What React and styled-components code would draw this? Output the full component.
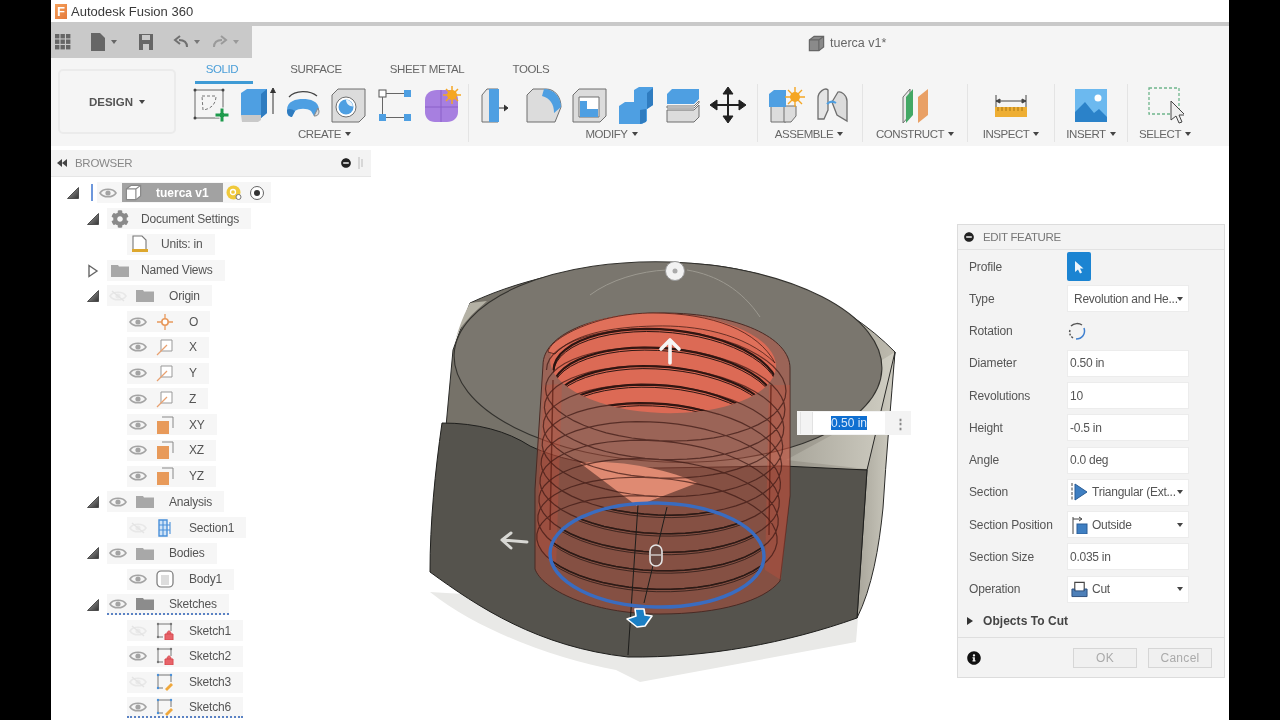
import React from 'react'
import styled, { createGlobalStyle } from 'styled-components'
import { FaCog, FaInfoCircle, FaMinusCircle } from 'react-icons/fa'

const GlobalStyle = createGlobalStyle`
  html, body { margin: 0; padding: 0; background: #000; }
  body { font-family: "Liberation Sans", Arial, sans-serif; overflow: hidden; }
  * { box-sizing: border-box; }
`

const Screen = styled.div`
  width: 1280px;
  height: 720px;
  padding: 0 51px;
  background: #000;
`

const Window = styled.div`
  width: 100%;
  height: 100%;
  display: flex;
  flex-direction: column;
  background: #fff;
  overflow: hidden;
  filter: blur(0.45px);
`

const TitleBar = styled.div`
  height: 22px;
  display: flex;
  align-items: center;
  padding-left: 4px;
  background: #fff;
  flex: none;
`

const AppLogo = styled.span`
  width: 12px;
  height: 15px;
  margin-right: 4px;
  background: linear-gradient(135deg, #f6a05a, #e4793a);
  color: #fff;
  font-size: 13px;
  font-weight: bold;
  line-height: 15px;
  text-align: center;
`

const AppName = styled.span`
  font-size: 13px;
  color: #3a3a3a;
`

const TopStrip = styled.div`
  height: 4px;
  background: #c9c9c9;
  flex: none;
`

const Ribbon = styled.div`
  height: 120px;
  background: #f5f5f5;
  flex: none;
  display: flex;
  flex-direction: column;
`

const TopRow = styled.div`
  height: 32px;
  display: flex;
  align-items: center;
  flex: none;
`

const QuickBar = styled.div`
  width: 201px;
  height: 32px;
  display: flex;
  align-items: center;
  background: #c9c9c9;
`

const DocTitle = styled.div`
  margin-left: 555px;
  padding-top: 2px;
  display: flex;
  align-items: center;
  gap: 4px;
  font-size: 12.5px;
  color: #666;
`

const ToolsRow = styled.div`
  flex: 1;
  display: flex;
  padding-left: 7px;
`

const DesignButton = styled.div`
  width: 118px;
  height: 65px;
  margin-top: 11px;
  border: 2px solid #ebebeb;
  border-radius: 5px;
  display: flex;
  align-items: center;
  justify-content: center;
  gap: 6px;
  font-size: 11.5px;
  font-weight: bold;
  color: #555;
`

const Caret = styled.span`
  display: inline-block;
  flex: none;
  width: 0;
  height: 0;
  border-left: 3px solid transparent;
  border-right: 3px solid transparent;
  border-top: 4px solid ${({ $color }) => $color || '#444'};
`

const ToolsArea = styled.div`
  margin-left: 15px;
  flex: 1;
  display: flex;
  flex-direction: column;
`

const Tabs = styled.div`
  height: 26px;
  display: flex;
  padding-left: 4px;
  flex: none;
`

const Tab = styled.div`
  width: ${({ $width }) => $width}px;
  height: 26px;
  padding: 5px ${({ $active }) => ($active ? 4 : 0)}px 0 0;
  text-align: center;
  font-size: 11.5px;
  letter-spacing: -0.4px;
  color: ${({ $active }) => ($active ? '#4a9ed8' : '#666')};
  border-bottom: 3px solid ${({ $active }) => ($active ? '#3f9bd5' : 'transparent')};
`

const Groups = styled.div`
  display: flex;
  height: 60px;
`

const Group = styled.div`
  width: ${({ $width }) => $width}px;
  display: flex;
  flex-direction: column;
  align-items: center;
  border-right: 1px solid ${({ $last }) => ($last ? 'transparent' : '#e4e4e4')};
  height: 58px;
`

const GroupIcons = styled.div`
  display: flex;
  height: 41px;
  align-items: center;
  margin-left: ${({ $shift }) => $shift || 0}px;
`

const ToolSlot = styled.div`
  width: 46px;
  height: 36px;
  display: flex;
  align-items: center;
  justify-content: center;
`

const GroupLabel = styled.div`
  display: flex;
  align-items: center;
  gap: 4px;
  margin-top: 3px;
  margin-left: ${({ $shift }) => $shift || 0}px;
  font-size: 11.5px;
  letter-spacing: -0.45px;
  color: #666;
`

const Canvas = styled.div`
  position: relative;
  flex: 1;
  background: #fff;
`

const NutDrawing = styled.svg`
  position: absolute;
  left: 0;
  top: 0;
  width: 1178px;
  height: 574px;
`

const Browser = styled.div`
  position: relative;
  width: 320px;
  padding-top: 4px;
`

const BrowserHead = styled.div`
  height: 27px;
  margin-bottom: 3px;
  display: flex;
  align-items: center;
  padding: 0 7px 0 5px;
  background: #f3f3f3;
  border-bottom: 1px solid #e6e6e6;
  font-size: 11.5px;
  letter-spacing: -0.3px;
  color: #888;
`

const HeadTitle = styled.span`
  margin-left: 7px;
  flex: 1;
`

const Row = styled.div`
  height: 25.75px;
  display: flex;
  align-items: center;
  padding-left: ${({ $left }) => $left}px;
`

const Toggle = styled.span`
  width: 12px;
  height: 12px;
  margin-right: 8px;
  flex: none;
  display: flex;
`

const ActiveBar = styled.span`
  width: 2px;
  height: 17px;
  margin: 0 4px 0 4px;
  background: #6d97dc;
`

const Chip = styled.div`
  height: 21px;
  display: flex;
  align-items: center;
  background: #f6f6f6;
  padding-right: ${({ $pad }) => ($pad === undefined ? 12 : $pad)}px;
  border-bottom: ${({ $warn }) => ($warn ? '2px dotted #5a82c4' : 'none')};
`

const EyeSlot = styled.span`
  width: 22px;
  display: flex;
  justify-content: center;
  flex: none;
`

const IconSlot = styled.span`
  width: ${({ $wide }) => ($wide ? 32 : 26)}px;
  display: flex;
  justify-content: center;
  flex: none;
  color: #8a8a8a;
`

const NodeLabel = styled.span`
  margin-left: 8px;
  font-size: 12px;
  letter-spacing: -0.2px;
  color: #555;
  white-space: nowrap;
`

const RootName = styled.div`
  width: 101px;
  height: 19px;
  display: flex;
  align-items: center;
  padding-left: 2px;
  background: #a2a2a2;
  margin-left: 3px;
  font-size: 12px;
  font-weight: bold;
  color: #fff;
`

const RootText = styled.span`
  margin-left: 13px;
`

const RootBadges = styled.div`
  display: flex;
  align-items: center;
  gap: 7px;
  margin-left: 3px;
`

const EditPanel = styled.div`
  position: absolute;
  left: 906px;
  top: 78px;
  width: 268px;
  height: 454px;
  background: #f3f3f3;
  border: 1px solid #dcdcdc;
  display: flex;
  flex-direction: column;
`

const PanelHead = styled.div`
  height: 25px;
  display: flex;
  align-items: center;
  gap: 9px;
  padding-left: 6px;
  border-bottom: 1px solid #e2e2e2;
  font-size: 11.5px;
  letter-spacing: -0.35px;
  color: #777;
  flex: none;
`

const PanelBody = styled.div`
  flex: 1;
  padding-top: 0.5px;
`

const Field = styled.div`
  height: 32.25px;
  display: flex;
  align-items: center;
  padding-left: 11px;
`

const FieldLabel = styled.span`
  width: 98px;
  font-size: 12px;
  color: #555;
  letter-spacing: -0.15px;
  white-space: nowrap;
  flex: none;
`

const PickButton = styled.div`
  width: 24px;
  height: 29px;
  border-radius: 2px;
  background: #1b84d2;
  display: flex;
  align-items: center;
  justify-content: center;
`

const Control = styled.div`
  width: 122px;
  height: 27px;
  display: flex;
  align-items: center;
  gap: 4px;
  padding: 0 5px 0 ${({ $pad }) => $pad}px;
  background: #fff;
  border: 1px solid #ececec;
  font-size: 12px;
  letter-spacing: -0.25px;
  color: #555;
  white-space: nowrap;
`

const ControlText = styled.span`
  flex: 1;
  min-width: 0;
`

const ObjectsRow = styled.div`
  height: 32px;
  display: flex;
  align-items: center;
  gap: 10px;
  padding-left: 9px;
  font-size: 12px;
  font-weight: bold;
  letter-spacing: 0.05px;
  color: #444;
`

const SideCaret = styled.span`
  width: 0;
  height: 0;
  border-top: 4px solid transparent;
  border-bottom: 4px solid transparent;
  border-left: 6px solid #333;
`

const PanelFoot = styled.div`
  height: 40px;
  display: flex;
  align-items: center;
  padding: 0 12px 0 9px;
  border-top: 1px solid #dedede;
  flex: none;
`

const FootButton = styled.div`
  width: 64px;
  height: 20px;
  margin-left: ${({ $gap }) => $gap}px;
  background: #f0f0f0;
  border: 1px solid #d6d6d6;
  text-align: center;
  line-height: 18px;
  font-size: 12px;
  letter-spacing: 0.3px;
  color: #aaa;
`

const FloatInput = styled.div`
  position: absolute;
  left: 746px;
  top: 265px;
  width: 114px;
  height: 24px;
  background: #f3f3f3;
  display: flex;
  align-items: center;
  padding-left: 3px;
`

const GripLines = styled.span`
  width: 13px;
  height: 22px;
  border-left: 1px solid #e2e2e2;
  border-right: 1px solid #e2e2e2;
`

const FloatField = styled.div`
  width: 72px;
  height: 22px;
  background: #fff;
  display: flex;
  align-items: center;
  justify-content: center;
  font-size: 12px;
`

const Selected = styled.span`
  background: #0f6fd1;
  color: #d8e8fa;
`

const Grip = styled.span`
  margin-left: 9px;
  color: #888;
  font-size: 13px;
  font-weight: bold;
  line-height: 1;
`

const Eye = ({ off }) => (
  <svg width="18" height="12" viewBox="0 0 18 12">
    <path d="M1 6c3-5 13-5 16 0-3 5-13 5-16 0z" fill="none" stroke={off ? '#e8e8e8' : '#a4a4a4'} strokeWidth="1.6" />
    <circle cx="9" cy="6" r="2.6" fill={off ? '#eaeaea' : '#a4a4a4'} />
    {off && <path d="M3 1l12 10" stroke="#e4e4e4" strokeWidth="1.4" />}
  </svg>
)

const OpenTriangle = () => (
  <svg width="12" height="12" viewBox="0 0 12 12">
    <defs>
      <linearGradient id="tri" x1="0" x2="1" y1="0" y2="1">
        <stop offset="0" stopColor="#aaa" />
        <stop offset="1" stopColor="#333" />
      </linearGradient>
    </defs>
    <path d="M11.500 0.500v11H0.500z" fill="url(#tri)" stroke="#444" strokeWidth="0.9" />
  </svg>
)

const ClosedTriangle = () => (
  <svg width="12" height="14" viewBox="0 0 12 14">
    <path d="M2 1.5l8 5.5-8 5.5z" fill="#fff" stroke="#666" strokeWidth="1.4" />
  </svg>
)

const Folder = ({ warn }) => (
  <svg width="18" height="13" viewBox="0 0 18 13">
    <path d="M0 1h7l1 1.5h10V13H0z" fill={warn ? '#8c8c8c' : '#a8a8a8'} />
  </svg>
)

const OriginPoint = () => (
  <svg width="18" height="18" viewBox="0 0 18 18">
    <path d="M9 1v16M1 9h16" stroke="#e8995c" strokeWidth="1.3" />
    <circle cx="9" cy="9" r="3.2" fill="#fff" stroke="#e8995c" strokeWidth="1.6" />
  </svg>
)

const AxisIcon = () => (
  <svg width="18" height="18" viewBox="0 0 18 18">
    <path d="M5 2h11v11H5z" fill="#fff" stroke="#999" strokeWidth="1" />
    <path d="M1 17L11 7" stroke="#e8a070" strokeWidth="1.2" />
  </svg>
)

const PlaneIcon = () => (
  <svg width="18" height="18" viewBox="0 0 18 18">
    <path d="M6 1h11v11" fill="none" stroke="#888" strokeWidth="1" />
    <rect x="1" y="5" width="12" height="13" fill="#e89a5a" />
  </svg>
)

const SectionIcon = () => (
  <svg width="16" height="18" viewBox="0 0 16 18">
    <path d="M2 1h8v16H2z" fill="#cfe3f7" stroke="#4a90d9" strokeWidth="1.4" />
    <path d="M2 6h11M2 11h11M6 1v16M13 3v12" stroke="#4a90d9" strokeWidth="1.1" fill="none" />
  </svg>
)

const BodyIcon = () => (
  <svg width="18" height="18" viewBox="0 0 18 18">
    <rect x="1" y="1" width="16" height="16" rx="4" fill="#fff" stroke="#777" strokeWidth="1.2" />
    <rect x="5" y="5" width="8" height="10" fill="#ddd" />
  </svg>
)

const SketchNode = ({ color, badge }) => (
  <svg width="18" height="18" viewBox="0 0 18 18">
    <path d="M2 2h13M2 2v13M2 15h5M15 2v7" stroke="#777" strokeWidth="1" fill="none" />
    <g fill={color}>
      <circle cx="2" cy="2" r="1.2" />
      <circle cx="15" cy="2" r="1.2" />
      <circle cx="2" cy="15" r="1.2" />
    </g>
    {badge === 'lock' && <path d="M9 12h8v6H9zM11 12c0-4 4-4 4 0" fill="#e8646a" stroke="#d84a50" strokeWidth="1" />}
    {badge === 'pen' && <path d="M9 16l6-6 2 2-6 6z" fill="#f0a83c" />}
  </svg>
)

const UnitsIcon = () => (
  <svg width="18" height="18" viewBox="0 0 18 18">
    <path d="M2 15V1h9l4 4v10" fill="#fff" stroke="#777" strokeWidth="1.1" />
    <rect x="1" y="14" width="16" height="3" fill="#dda72e" />
  </svg>
)

const Cube = ({ size = 16, fill = '#fff', stroke = '#888' }) => (
  <svg width={size} height={size} viewBox="0 0 16 16">
    <path d="M2 5l4-3h8v9l-4 3H2z" fill={fill} stroke={stroke} />
    <path d="M2 5h8v9M10 5l4-3" fill="none" stroke={stroke} />
  </svg>
)

const GridIcon = () => (
  <svg width="16" height="16" viewBox="0 0 16 16" fill="#666">
    {[0, 5.5, 11].map(x => [0, 5.5, 11].map(y => <rect key={x + '-' + y} x={x} y={y} width="4.4" height="4.4" />))}
  </svg>
)

const QuickSlot = styled.span`
  display: flex;
  align-items: center;
  gap: 5px;
  margin-left: ${({ $left }) => $left}px;
`

const QuickIcon = ({ d, fill = '#666', stroke = 'none', w = 16 }) => (
  <svg width={w} height="18" viewBox={`0 0 ${w} 18`}>
    <path d={d} fill={fill} stroke={stroke} strokeWidth="2" fillRule="evenodd" />
  </svg>
)

const Tool = ({ children }) => (
  <ToolSlot>
    <svg width="40" height="38" viewBox="0 0 40 38">{children}</svg>
  </ToolSlot>
)

const BLUE = '#4e9fe2'
const BLUE_DK = '#2f7cc0'
const GRAY = '#dcdcdc'
const LINE = '#6f6f6f'

const createTools = [
  <g key="sketch">
    <path d="M4 4h28v28H4z" fill="none" stroke="#666" strokeWidth="1" />
    <path d="M11 10h14c0 8-5 13-13 14z" fill="none" stroke="#777" strokeDasharray="3 2" />
    <path d="M29 22h4v5h5v4h-5v5h-4v-5h-5v-4h5z" fill="#1d9a4c" stroke="#f5f5f5" />
    <g fill="#444"><circle cx="4" cy="4" r="1.5" /><circle cx="32" cy="4" r="1.5" /><circle cx="4" cy="32" r="1.5" /></g>
  </g>,
  <g key="extrude">
    <path d="M4 29V7l6-4h20v24l-6 5H8z" fill={BLUE} />
    <path d="M24 8l6-5v24l-6 5z" fill={BLUE_DK} />
    <path d="M4 29h20v5l-3 2H5z" fill="#c9c9c9" />
    <path d="M36 28V4M33.5 7L36 2l2.5 5" stroke="#333" fill="#333" strokeWidth="1" />
  </g>,
  <g key="revolve">
    <path d="M4 24c0-9 9-11 16-11s16 2 16 11c0 5-2 6-5 6l-3-5c-4-3-12-3-16 0l-3 5c-3 0-5-1-5-6z" fill={BLUE} />
    <path d="M4 24c0 5 2 7 5 7l3-6c-3-2-6-3-8-1z" fill={BLUE_DK} />
    <path d="M31 30l4-8 1 3c0 4-2 5-5 5z" fill="#ddd" stroke="#888" />
    <path d="M6 11C12 4 27 4 34 10" fill="none" stroke="#444" strokeWidth="1.2" />
  </g>,
  <g key="hole">
    <path d="M3 9l6-6h27v27l-6 6H3z" fill={GRAY} stroke={LINE} />
    <circle cx="17" cy="21" r="10" fill="#fff" stroke={LINE} />
    <circle cx="17" cy="21" r="7.5" fill={BLUE} />
    <path d="M17 13.5a7.500 7.500 0 0 1 7 7c-4 0-7-3-7-7z" fill="#e8f2fb" />
  </g>,
  <g key="pattern">
    <rect x="4" y="4" width="7" height="7" fill="#fff" stroke="#555" />
    <rect x="29" y="4" width="7" height="7" fill={BLUE} />
    <rect x="4" y="28" width="7" height="7" fill={BLUE} />
    <rect x="29" y="28" width="7" height="7" fill={BLUE} />
    <path d="M11 7.500h18M7.500 11v17M11 31.500h18" stroke="#666" />
  </g>,
  <g key="form">
    <path d="M4 14c0-6 5-10 12-10h12c6 0 9 5 9 10v12c0 6-5 10-11 10H14C8 36 4 32 4 26z" fill="#a77fe0" />
    <path d="M20 4v32M4 21h33" stroke="#8a60c8" />
    <circle cx="31" cy="9" r="5" fill="#f5a623" />
    <path d="M31 0v18M22 9h18M25 3l12 12M37 3L25 15" stroke="#f5a623" strokeWidth="1.5" />
  </g>
]

const modifyTools = [
  <g key="press">
    <path d="M4 36V9l5-6h11v33z" fill="#e8e8e8" stroke={LINE} />
    <path d="M11 3h10v33H11z" fill={BLUE} />
    <path d="M21 22h8M26 19l4 3-4 3" stroke="#333" fill="#333" />
  </g>,
  <g key="fillet">
    <path d="M3 36V9l6-6h13c9 0 15 8 15 18l-6 15z" fill={GRAY} stroke={LINE} />
    <path d="M20 3c10 0 17 8 17 18l-7 6c0-9-4-15-12-17z" fill={BLUE} />
  </g>,
  <g key="chamfer">
    <path d="M3 36V9l6-6h27v27l-6 6z" fill={GRAY} stroke={LINE} />
    <path d="M9 11h20v20H9z" fill="#fff" stroke={LINE} />
    <path d="M10 15h7v8h11v8H10z" fill={BLUE} />
  </g>,
  <g key="combine">
    <path d="M18 4l5-3h14v18l-6 4v12l-5 3H3V20l6-4h9z" fill={BLUE} />
    <path d="M31 23V7l6-5v17zM24 38V24l6-1v13z" fill={BLUE_DK} />
  </g>,
  <g key="offset">
    <path d="M5 8l5-5h27v10l-5 5H5z" fill={BLUE} />
    <path d="M5 20h27l5-5v2l-5 5H5z" fill="#fff" stroke="#777" />
    <path d="M5 24h27l5-5v12l-5 5H5z" fill={GRAY} stroke={LINE} />
  </g>,
  <g key="move" fill="#222" stroke="#222">
    <path d="M20 6v26M7 19h26" strokeWidth="2" />
    <path d="M20 1l5 7H15zM20 37l5-7H15zM2 19l7-5v10zM38 19l-7-5v10z" />
  </g>
]

const assembleTools = [
  <g key="comp">
    <path d="M5 36V20h15v16z" fill={GRAY} stroke={LINE} />
    <path d="M18 36V20h12v10l-5 6z" fill={GRAY} stroke={LINE} />
    <path d="M3 21V8l5-4h12v17z" fill={BLUE} />
    <circle cx="29" cy="11" r="5" fill="#f5a623" />
    <path d="M29 1v20M19 11h20M22 4l14 14M36 4L22 18" stroke="#f5a623" strokeWidth="1.4" />
  </g>,
  <g key="joint">
    <path d="M6 33V12c0-6 7-11 10-8v20l-4 9z" fill="#e5e5e5" stroke={LINE} strokeWidth="1.3" />
    <path d="M20 16l6-10c3-1 9 3 9 9v20l-10-6z" fill={GRAY} stroke={LINE} strokeWidth="1.3" />
    <path d="M15 18c3-3 6-3 9-1" stroke={BLUE} strokeWidth="2" fill="none" />
  </g>
]

const toolGroups = [
  { label: 'CREATE', width: 278, tools: createTools, iconShift: -8, labelShift: -10 },
  { label: 'MODIFY', width: 289, tools: modifyTools, labelShift: -3 },
  { label: 'ASSEMBLE', width: 105, tools: assembleTools, iconShift: -2, labelShift: -2 },
  {
    label: 'CONSTRUCT',
    width: 105,
    tools: [
      <g key="plane">
        <path d="M8 11l7-8v26l-7 8z" fill="#e8e8e8" stroke={LINE} />
        <path d="M11 11l7-8v26l-7 8z" fill="#43a865" />
        <path d="M23 11l10-8v26l-10 8z" fill="#e9a065" />
      </g>
    ]
  },
  {
    label: 'INSPECT',
    width: 87,
    tools: [
      <g key="measure">
        <path d="M5 9v14M35 9v14M5 15h30M5 15l4-2v4zM35 15l-4-2v4z" stroke="#444" fill="#444" strokeWidth="1" />
        <rect x="4" y="21" width="32" height="10" fill="#eeae33" />
        <path d="M7 21v4M11 21v4M15 21v4M19 21v4M23 21v4M27 21v4M31 21v4" stroke="#a87612" />
      </g>
    ]
  },
  {
    label: 'INSERT',
    width: 73,
    tools: [
      <g key="image">
        <rect x="4" y="3" width="32" height="33" fill="#6cb9ef" />
        <circle cx="27" cy="12" r="3.500" fill="#fff" />
        <path d="M4 36V26l10-10 9 11 5-4 8 8v5z" fill="#2b82c9" />
      </g>
    ]
  },
  {
    label: 'SELECT',
    width: 73,
    last: true,
    labelShift: 2,
    tools: [
      <g key="select">
        <rect x="5" y="2" width="30" height="26" fill="none" stroke="#6fb58c" strokeWidth="1.3" strokeDasharray="3 2" />
        <path d="M27 15v19l5-4 3 7 3-1-3-7h6z" fill="#eee" stroke="#444" />
      </g>
    ]
  }
]

const TreeIcon = ({ name }) => {
  if (name === 'gear') return <FaCog size={18} />
  if (name === 'folder') return <Folder />
  if (name === 'folderWarn') return <Folder warn />
  if (name === 'units') return <UnitsIcon />
  if (name === 'point') return <OriginPoint />
  if (name === 'axis') return <AxisIcon />
  if (name === 'plane') return <PlaneIcon />
  if (name === 'section') return <SectionIcon />
  if (name === 'body') return <BodyIcon />
  if (name === 'sketchLock') return <SketchNode color="#777" badge="lock" />
  if (name === 'sketchEdit') return <SketchNode color="#4a90d9" badge="pen" />
  return null
}

const treeRows = [
  { left: 36, toggle: 'open', icon: 'gear', label: 'Document Settings' },
  { left: 76, icon: 'units', label: 'Units: in' },
  { left: 36, toggle: 'closed', icon: 'folder', label: 'Named Views' },
  { left: 36, toggle: 'open', eye: 'off', icon: 'folder', label: 'Origin' },
  { left: 76, eye: 'on', icon: 'point', label: 'O' },
  { left: 76, eye: 'on', icon: 'axis', label: 'X' },
  { left: 76, eye: 'on', icon: 'axis', label: 'Y' },
  { left: 76, eye: 'on', icon: 'axis', label: 'Z' },
  { left: 76, eye: 'on', icon: 'plane', label: 'XY' },
  { left: 76, eye: 'on', icon: 'plane', label: 'XZ' },
  { left: 76, eye: 'on', icon: 'plane', label: 'YZ' },
  { left: 36, toggle: 'open', eye: 'on', icon: 'folder', label: 'Analysis' },
  { left: 76, eye: 'off', icon: 'section', label: 'Section1' },
  { left: 36, toggle: 'open', eye: 'on', icon: 'folder', label: 'Bodies' },
  { left: 76, eye: 'on', icon: 'body', label: 'Body1' },
  { left: 36, toggle: 'open', eye: 'on', icon: 'folderWarn', label: 'Sketches', warn: true },
  { left: 76, eye: 'off', icon: 'sketchLock', label: 'Sketch1' },
  { left: 76, eye: 'on', icon: 'sketchLock', label: 'Sketch2' },
  { left: 76, eye: 'off', icon: 'sketchEdit', label: 'Sketch3' },
  { left: 76, eye: 'on', icon: 'sketchEdit', label: 'Sketch6', warn: true }
]

const TreeRow = ({ row }) => (
  <Row $left={row.left}>
    {row.toggle && (
      <Toggle>{row.toggle === 'open' ? <OpenTriangle /> : <ClosedTriangle />}</Toggle>
    )}
    <Chip $warn={row.warn}>
      {row.eye && <EyeSlot><Eye off={row.eye === 'off'} /></EyeSlot>}
      <IconSlot $wide={!!row.eye}><TreeIcon name={row.icon} /></IconSlot>
      <NodeLabel>{row.label}</NodeLabel>
    </Chip>
  </Row>
)

// helix of the cut thread; side picks the back half, the front half or all of it
const helixPath = (offset, rx, side) => {
  let d = ''
  let pen = false
  for (let i = 0; i <= 500; i++) {
    const t = (i / 500) * Math.PI * 2 * 9.25 - Math.PI
    const s = Math.sin(t)
    const visible = side === 'all' || (side === 'back' ? s <= 0.02 : s >= -0.02)
    if (!visible) {
      pen = false
      continue
    }
    const turn = t / (Math.PI * 2)
    const x = 666 - turn * 1.1 + rx * Math.cos(t)
    const y = 385 + turn * 18.6 + offset + 51 * s + (x - 660) * 0.05
    d += (pen ? 'L' : 'M') + x.toFixed(1) + ' ' + y.toFixed(1)
    pen = true
  }
  return d
}

const NutSvg = () => (
  <NutDrawing viewBox="51 146 1178 574">
    <defs>
      <linearGradient id="rightFace" x1="0" x2="1">
        <stop offset="0" stopColor="#a8a59a" />
        <stop offset="1" stopColor="#d0cec3" />
      </linearGradient>
      <linearGradient id="chamfer" x1="0" x2="1">
        <stop offset="0.55" stopColor="#767269" />
        <stop offset="1" stopColor="#bdbaae" />
      </linearGradient>
      <clipPath id="upperHole">
        <ellipse cx="663" cy="363" rx="113" ry="50" transform="rotate(2 663 363)" />
      </clipPath>
      <clipPath id="lowerRing">
        <ellipse cx="657" cy="555" rx="107" ry="52" transform="rotate(1 657 555)" />
      </clipPath>
    </defs>
    <path d="M430 592c50 40 130 68 186 78l24 12 216-40 2-24z" fill="#e9e9e7" />
    <path d="M470 303C530 275 600 263 675 263c90 0 170 38 220 89l-7 58-21 60H442l11-120z" fill="url(#chamfer)" stroke="#2a2a28" strokeWidth="1" />
    <path d="M470 303c-8 15-14 32-17 48 2-10 4-18 10-26 8-10 15-16 24-24z" fill="#b4b1a5" />
    <path d="M895 352l-13 8c-2 25-20 55-50 75l-46 25 81 9z" fill="url(#rightFace)" />
    <path d="M895 352l-28 118-10 148c15-30 22-70 26-110 3-50 8-105 12-156z" fill="url(#rightFace)" stroke="#2a2a28" />
    <ellipse cx="668" cy="362" rx="214" ry="100" fill="#7a766e" stroke="#33322e" strokeWidth="1.1" transform="rotate(2 668 362)" />
    <path d="M442 423c35 0 65 8 88 23 40 19 90 22 130 22l123 -2 84 4-10 148c-70 25-150 40-229 39-90-10-150-50-198-85 0-50 5-100 12-149z" fill="#55534d" stroke="#1f1f1d" strokeWidth="1" />
    <path d="M543 365c0-30 50-52 120-52 75 0 127 25 127 55v128l-10 85c-16 20-60 33-120 33-70 0-118-25-125-45l0-80z" fill="#c94d36" fillOpacity="0.42" stroke="#4a2a24" strokeWidth="1" />
    <path d="M544 385l-8 160 20 24 6-185zM769 385l-4 185 16 10 9-85v-110z" fill="#d4503a" fillOpacity="0.28" />
    <ellipse cx="663" cy="363" rx="113" ry="50" fill="#dc6a55" transform="rotate(2 663 363)" />
    <path d="M548 352c2-14 50-39 105-39 60 0 105 18 122 50-30-30-80-38-120-37-45 1-82 8-100 28z" fill="#e0705a" stroke="#4a2018" strokeWidth="0.8" />
    <path d="M580 463l57 43 60-23c-30-14-80-24-117-20z" fill="#df8a72" />
    <g clipPath="url(#upperHole)" fill="none" stroke="#2b1512">
      <path d={helixPath(0, 113, 'back')} strokeWidth="2.2" />
      <path d={helixPath(2.6, 113, 'back')} strokeWidth="1" />
    </g>
    <path d={helixPath(0, 120, 'all')} fill="none" stroke="#3a1712" strokeWidth="1.2" strokeOpacity="0.7" />
    <g clipPath="url(#lowerRing)" fill="none" stroke="#2b1a16">
      <path d={helixPath(0, 120, 'front')} strokeWidth="1.5" />
      <path d={helixPath(2.4, 120, 'front')} strokeWidth="0.8" />
    </g>
    <path d="M553 380l-3 150M771 385l-2 150" stroke="#5a1a10" strokeWidth="1.4" strokeOpacity="0.7" />
    <path d="M638 505l-10 150M667 507l-23 96" stroke="#1d1d1b" strokeWidth="1" />
    <ellipse cx="657" cy="555" rx="107" ry="52" fill="none" stroke="#3a6cc0" strokeWidth="3.4" transform="rotate(1 657 555)" />
    <path d="M590 295c20-15 50-24 77-25M687 270c30 5 55 20 73 47" fill="none" stroke="#9c9990" strokeWidth="1" />
    <circle cx="675" cy="271" r="9.5" fill="#f2f2f2" stroke="#999" />
    <circle cx="675" cy="271" r="2.5" fill="#aaa" />
    <path d="M670 363v-22M661 349l9-9 9 9" fill="none" stroke="#f5f5f5" strokeWidth="3.6" strokeLinecap="round" strokeLinejoin="round" />
    <path d="M527 542l-25-2M511 533l-9 7 9 8" fill="none" stroke="#d8d8d4" strokeWidth="3" strokeLinecap="round" strokeLinejoin="round" />
    <rect x="650" y="545" width="12" height="21" rx="6" fill="#6a4a42" stroke="#e4e4e4" strokeWidth="1.6" />
    <path d="M651 555h10" stroke="#e4e4e4" strokeWidth="1.2" />
    <path d="M635 609h9l1 6 7 1-7 10-8 1-10-8 9-3z" fill="#1b7fc4" stroke="#fff" strokeWidth="1.6" strokeLinejoin="round" />
  </NutDrawing>
)

const CursorIcon = () => (
  <svg width="10" height="14" viewBox="0 0 10 14">
    <path d="M1 1v11l3-2.500 2 4 2-1-2-4h3.500z" fill="#eef5fb" />
  </svg>
)

const RotationIcon = () => (
  <svg width="20" height="20" viewBox="0 0 20 20" fill="none" strokeWidth="1.5">
    <path d="M4 5c3-3 8-3 11-1" stroke="#555" />
    <path d="M17 7c2 6-2 11-8 11" stroke="#3f80d0" />
    <path d="M6 17c-3-2-4-5-3-8" stroke="#555" strokeDasharray="2 1.500" />
  </svg>
)

const ControlIcon = styled.svg`
  flex: none;
`

const TriangleIcon = () => (
  <ControlIcon width="17" height="18" viewBox="0 0 17 18">
    <path d="M1 0v18" stroke="#444" strokeDasharray="3 1.500" />
    <path d="M4 1l12 8-12 8z" fill="#3f7fc2" stroke="#2a5d96" />
  </ControlIcon>
)

const OutsideIcon = () => (
  <ControlIcon width="17" height="18" viewBox="0 0 17 18">
    <path d="M2 1v17M2 3h8M8 1l3 2-3 2" fill="none" stroke="#444" />
    <rect x="6" y="8" width="10" height="10" fill="#3f7fc2" stroke="#2a5d96" />
  </ControlIcon>
)

const CutIcon = () => (
  <ControlIcon width="17" height="18" viewBox="0 0 18 18">
    <path d="M4 11V2h10v9" fill="#fff" stroke="#444" strokeWidth="1.2" />
    <path d="M1 9h3v2h10V9h3v8H1z" fill="#4d7fb8" stroke="#2a4d7a" />
  </ControlIcon>
)

const fields = [
  { label: 'Type', text: 'Revolution and He...', select: true, pad: 6 },
  { label: 'Rotation', rotation: true },
  { label: 'Diameter', text: '0.50 in', pad: 2 },
  { label: 'Revolutions', text: '10', pad: 2 },
  { label: 'Height', text: '-0.5 in', pad: 2 },
  { label: 'Angle', text: '0.0 deg', pad: 2 },
  { label: 'Section', text: 'Triangular (Ext...', select: true, icon: <TriangleIcon />, pad: 3 },
  { label: 'Section Position', text: 'Outside', select: true, icon: <OutsideIcon />, pad: 3 },
  { label: 'Section Size', text: '0.035 in', pad: 2 },
  { label: 'Operation', text: 'Cut', select: true, icon: <CutIcon />, pad: 3 }
]

const App = () => (
  <Screen>
    <GlobalStyle />
    <Window>
      <TitleBar>
        <AppLogo>F</AppLogo>
        <AppName>Autodesk Fusion 360</AppName>
      </TitleBar>
      <TopStrip />
      <Ribbon>
        <TopRow>
          <QuickBar>
            <QuickSlot $left={4}><GridIcon /></QuickSlot>
            <QuickSlot $left={19}>
              <QuickIcon d="M1 0h9l5 5v13H1z" w={16} />
              <Caret $color="#666" />
            </QuickSlot>
            <QuickSlot $left={21}>
              <QuickIcon d="M1 1h14v16H1zM4 2v5h8V2zM5 11v6h6v-6z" w={16} />
            </QuickSlot>
            <QuickSlot $left={19}>
              <QuickIcon d="M14 14c0-5-3-7-8-7M7 3L2 7l5 4" fill="none" stroke="#707070" w={16} />
              <Caret $color="#777" />
            </QuickSlot>
            <QuickSlot $left={12}>
              <QuickIcon d="M2 14c0-5 3-7 8-7M9 3l5 4-5 4" fill="none" stroke="#9a9a9a" w={16} />
              <Caret $color="#999" />
            </QuickSlot>
          </QuickBar>
          <DocTitle>
            <Cube size={19} fill="#8a8a8a" stroke="#666" />
            tuerca v1*
          </DocTitle>
        </TopRow>
        <ToolsRow>
          <DesignButton>DESIGN <Caret /></DesignButton>
          <ToolsArea>
            <Tabs>
              <Tab $width={58} $active>SOLID</Tab>
              <Tab $width={126}>SURFACE</Tab>
              <Tab $width={96}>SHEET METAL</Tab>
              <Tab $width={112}>TOOLS</Tab>
            </Tabs>
            <Groups>
              {toolGroups.map(g => (
                <Group key={g.label} $width={g.width} $last={g.last}>
                  <GroupIcons $shift={g.iconShift}>
                    {g.tools.map(t => <Tool key={t.key}>{t}</Tool>)}
                  </GroupIcons>
                  <GroupLabel $shift={g.labelShift}>{g.label} <Caret /></GroupLabel>
                </Group>
              ))}
            </Groups>
          </ToolsArea>
        </ToolsRow>
      </Ribbon>
      <Canvas>
        <NutSvg />
        <Browser>
          <BrowserHead>
            <svg width="12" height="8" viewBox="0 0 12 8" fill="#444">
              <path d="M6 0v8L1 4zM11 0v8L6 4z" />
            </svg>
            <HeadTitle>BROWSER</HeadTitle>
            <FaMinusCircle size={10} color="#222" />
            <svg width="6" height="12" viewBox="0 0 6 12" style={{ marginLeft: 7 }}>
              <path d="M1 0v12M4 2v8" stroke="#bbb" />
            </svg>
          </BrowserHead>
          <Row $left={16}>
            <Toggle><OpenTriangle /></Toggle>
            <ActiveBar />
            <Chip $pad={6}>
              <EyeSlot><Eye /></EyeSlot>
              <RootName>
                <Cube size={19} />
                <RootText>tuerca v1</RootText>
              </RootName>
              <RootBadges>
                <svg width="16" height="16" viewBox="0 0 16 16">
                  <circle cx="7.500" cy="7.500" r="7" fill="#f0c93a" />
                  <circle cx="7" cy="7" r="2.500" fill="none" stroke="#fff" strokeWidth="1.300" />
                  <circle cx="12.500" cy="12" r="2.500" fill="#fff" stroke="#777" />
                </svg>
                <svg width="16" height="16" viewBox="0 0 16 16">
                  <circle cx="8" cy="8" r="6.500" fill="#fff" stroke="#666" />
                  <circle cx="8" cy="8" r="3" fill="#333" />
                </svg>
              </RootBadges>
            </Chip>
          </Row>
          {treeRows.map(r => <TreeRow key={r.label} row={r} />)}
        </Browser>
        <FloatInput>
          <GripLines />
          <FloatField><Selected>0.50 in</Selected></FloatField>
          <Grip>⋮</Grip>
        </FloatInput>
        <EditPanel>
          <PanelHead>
            <FaMinusCircle size={10} color="#222" />
            EDIT FEATURE
          </PanelHead>
          <PanelBody>
            <Field>
              <FieldLabel>Profile</FieldLabel>
              <PickButton><CursorIcon /></PickButton>
            </Field>
            {fields.map(f => (
              <Field key={f.label}>
                <FieldLabel>{f.label}</FieldLabel>
                {f.rotation ? <RotationIcon /> : (
                  <Control $pad={f.pad}>
                    {f.icon}
                    <ControlText>{f.text}</ControlText>
                    {f.select && <Caret />}
                  </Control>
                )}
              </Field>
            ))}
            <ObjectsRow><SideCaret />Objects To Cut</ObjectsRow>
          </PanelBody>
          <PanelFoot>
            <FaInfoCircle size={14} color="#111" />
            <FootButton $gap={92}>OK</FootButton>
            <FootButton $gap={11}>Cancel</FootButton>
          </PanelFoot>
        </EditPanel>
      </Canvas>
    </Window>
  </Screen>
)

export default App
